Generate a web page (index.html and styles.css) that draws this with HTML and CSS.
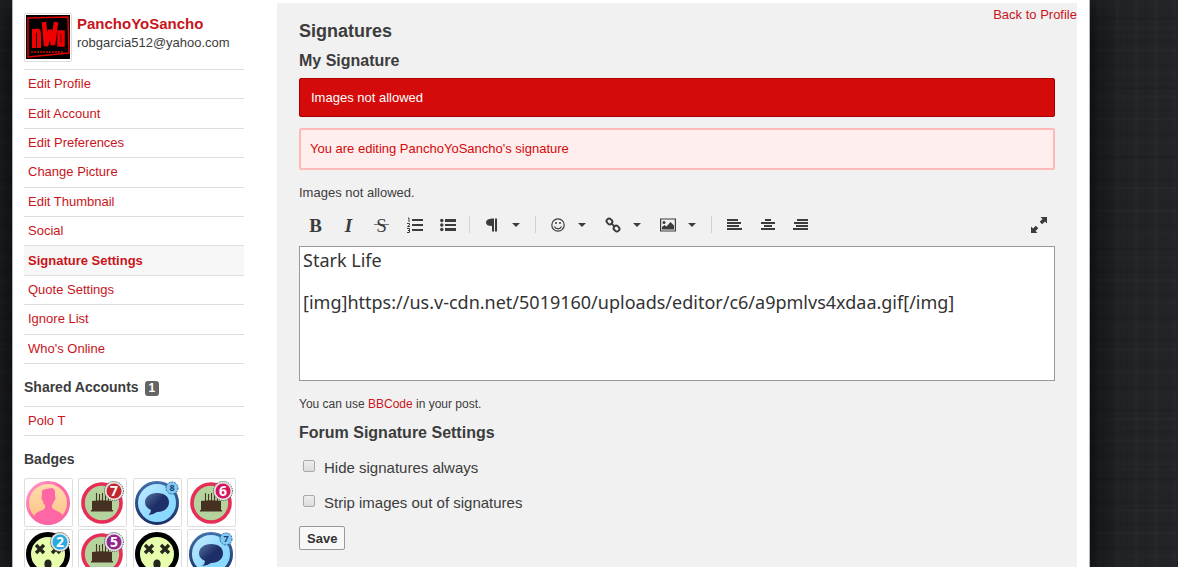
FILE: index.html
```html
<!DOCTYPE html>
<html lang="en">
<head>
  <meta charset="utf-8">
  <title>Signature Settings</title>
  <link rel="stylesheet" href="styles.css">
</head>
<body>
  <!-- Shared badge and icon shapes -->
  <svg class="sprite" aria-hidden="true">
    <defs>
      <linearGradient id="peach" x1="0" y1="0" x2="0" y2="1">
        <stop offset="0" stop-color="#ffdcae"/>
        <stop offset="1" stop-color="#fdc184"/>
      </linearGradient>
      <linearGradient id="pink" x1="0" y1="0" x2="1" y2="1">
        <stop offset="0" stop-color="#ff9cc6"/>
        <stop offset="0.5" stop-color="#ff66a6"/>
      </linearGradient>
      <linearGradient id="navy" x1="0" y1="0" x2="0" y2="1">
        <stop offset="0" stop-color="#3f6fa8"/>
        <stop offset="1" stop-color="#1d2e66"/>
      </linearGradient>
      <linearGradient id="sky" x1="0" y1="0" x2="1" y2="1">
        <stop offset="0" stop-color="#c9edff"/>
        <stop offset="0.6" stop-color="#8cd9ff"/>
      </linearGradient>
      <linearGradient id="bubble" x1="0" y1="0" x2="1" y2="1">
        <stop offset="0" stop-color="#56709f"/>
        <stop offset="0.5" stop-color="#1d2f66"/>
      </linearGradient>
      <clipPath id="round"><circle cx="22" cy="22" r="22"/></clipPath>
    </defs>
    <symbol id="badge-person" viewBox="0 0 44 44">
      <circle cx="22" cy="22" r="20.5" fill="url(#peach)" stroke="url(#pink)" stroke-width="3"/>
      <path clip-path="url(#round)" fill="#ff66a6" d="M16 10q1-2 4-2l6-1q3 1 3 4v4q1 1 0 4l-1 1q-1 3-2 4v3q2 2 5 3 6 2 6 7v7H8v-7q0-5 6-7 4-1 5-3v-3q-2-1-2-4l-1-1q-1-3 0-4z"/>
    </symbol>
    <symbol id="badge-cake" viewBox="0 0 44 44">
      <circle cx="22" cy="22" r="19" fill="#b5d39c" stroke="#e52d55" stroke-width="3.6"/>
      <path stroke="#4a3426" stroke-width="1.1" d="M16.500 12v8M19.500 13v7M22.500 12v8M25.500 13v7M28.500 15v5"/>
      <path fill="#463022" d="M12 20q10-1.500 20 0v9h1v1.500H11V29h1z"/>
    </symbol>
    <symbol id="badge-comment" viewBox="0 0 44 44">
      <circle cx="22" cy="22" r="20.500" fill="url(#sky)" stroke="url(#navy)" stroke-width="3"/>
      <path fill="url(#bubble)" d="M22 12c8 0 12 4 12 9.500S29 31 22 31q-4 3-9 3 3-2 3-5-6-3-6-7.500C10 16 15 12 22 12z"/>
    </symbol>
    <symbol id="badge-dizzy" viewBox="0 0 44 44">
      <circle cx="22" cy="22" r="19.500" fill="#e7ffad" stroke="#000" stroke-width="5"/>
      <path stroke="#26261f" stroke-width="3.400" d="M10 13l8 8M18 13l-8 8M26 13l8 8M34 13l-8 8"/>
      <ellipse cx="22" cy="32" rx="3.600" ry="4.500" fill="#26261f"/>
    </symbol>
    <symbol id="caret" viewBox="0 0 8 4">
      <path d="M0 0h8L4 4z"/>
    </symbol>
  </svg>

  <div class="page">
    <aside class="sidebar">
      <div class="user">
        <a class="photo" href="#" aria-label="PanchoYoSancho">
          <svg viewBox="0 0 44 44">
            <path fill="#000" d="M0 0h44v44H0z"/>
            <path fill="none" stroke="#e00000" stroke-width="1.500" d="M2 3l40-1 1 36-41 4z"/>
            <g fill="none" stroke="#f00000">
              <path stroke-width="4" d="M8 33V14M7 17q6-4 6 2v14"/>
              <path stroke-width="4.500" d="M18 7l2 24 4-16 3 15 3-23"/>
              <path stroke-width="3.500" d="M33 17h4v13h-4z"/>
            </g>
            <path stroke="#a00000" stroke-width="2" stroke-dasharray="2 1" d="M5 37h33"/>
          </svg>
        </a>
        <div class="user-text">
          <a class="username" href="#">PanchoYoSancho</a>
          <span class="email">robgarcia512@yahoo.com</span>
        </div>
      </div>

      <ul class="menu account-menu">
        <li><a href="#">Edit Profile</a></li>
        <li><a href="#">Edit Account</a></li>
        <li><a href="#">Edit Preferences</a></li>
        <li><a href="#">Change Picture</a></li>
        <li><a href="#">Edit Thumbnail</a></li>
        <li><a href="#">Social</a></li>
        <li class="active"><a href="#">Signature Settings</a></li>
        <li><a href="#">Quote Settings</a></li>
        <li><a href="#">Ignore List</a></li>
        <li><a href="#">Who's Online</a></li>
      </ul>

      <h4>Shared Accounts <span class="count">1</span></h4>
      <ul class="menu">
        <li><a href="#">Polo T</a></li>
      </ul>

      <h4>Badges</h4>
      <div class="badges">
        <a href="#" aria-label="Photogenic"><svg viewBox="0 0 44 44"><use href="#badge-person"/></svg></a>
        <a href="#" aria-label="Seventh anniversary"><svg viewBox="0 0 44 44"><use href="#badge-cake"/><g class="seal"><circle cx="34" cy="10" r="9.5"/><circle class="red" cx="34" cy="10" r="7.5"/><text x="34" y="15">7</text></g></svg></a>
        <a href="#" aria-label="Comments, level 8"><svg viewBox="0 0 44 44"><use href="#badge-comment"/><g class="seal small"><circle cx="37" cy="7" r="6"/><text x="37" y="10">8</text></g></svg></a>
        <a href="#" aria-label="Sixth anniversary"><svg viewBox="0 0 44 44"><use href="#badge-cake"/><g class="seal"><circle cx="34" cy="10" r="9.5"/><circle class="pink" cx="34" cy="10" r="7.5"/><text x="34" y="15">6</text></g></svg></a>
        <a href="#" aria-label="Second warning"><svg viewBox="0 0 44 44"><use href="#badge-dizzy"/><g class="seal"><circle cx="34" cy="10" r="9.5"/><circle class="blue" cx="34" cy="10" r="7.5"/><text x="34" y="15">2</text></g></svg></a>
        <a href="#" aria-label="Fifth anniversary"><svg viewBox="0 0 44 44"><use href="#badge-cake"/><g class="seal"><circle cx="34" cy="10" r="9.5"/><circle class="purple" cx="34" cy="10" r="7.5"/><text x="34" y="15">5</text></g></svg></a>
        <a href="#" aria-label="First warning"><svg viewBox="0 0 44 44"><use href="#badge-dizzy"/></svg></a>
        <a href="#" aria-label="Comments, level 7"><svg viewBox="0 0 44 44"><use href="#badge-comment"/><g class="seal small"><circle cx="37" cy="7" r="6"/><text x="37" y="10">7</text></g></svg></a>
      </div>
    </aside>

    <main class="content">
      <div class="options"><a href="#">Back to Profile</a></div>

      <form class="settings">
        <h1>Signatures</h1>
        <h2>My Signature</h2>
        <div class="alert">Images not allowed</div>
        <div class="warning">You are editing PanchoYoSancho's signature</div>
        <p class="rule">Images not allowed.</p>

        <div class="toolbar">
          <button type="button" class="letter bold" title="Bold">B</button>
          <button type="button" class="letter italic" title="Italic">I</button>
          <button type="button" class="letter strike" title="Strikethrough">S</button>
          <button type="button" title="Ordered list">
            <svg width="16" height="16" viewBox="0 0 16 16"><path d="M5 2h11v2H5zM5 7h11v2H5zM5 12h11v2H5z"/><path fill="none" stroke="#3c3c3c" d="M1 1h1v4M0 6.500h2.500v1.500L.500 9.500H3M0 11.500h2.500v4H0M1 13.500h1.500"/></svg>
          </button>
          <button type="button" title="Unordered list">
            <svg width="16" height="16" viewBox="0 0 16 16"><path d="M5 2h11v3H5zM5 7h11v2H5zM5 11h11v3H5z"/><circle cx="1.800" cy="3.500" r="1.700"/><circle cx="1.800" cy="8" r="1.700"/><circle cx="1.800" cy="12.500" r="1.700"/></svg>
          </button>
          <span class="sep"></span>
          <button type="button" class="dropdown" title="Format">
            <svg width="16" height="16" viewBox="0 0 16 16"><path d="M8 1.500h2v13H8V9Q2 9 2 5.500T8 1.500zM11 1.500h2v13h-2z"/></svg>
            <svg class="caret" width="8" height="4"><use href="#caret"/></svg>
          </button>
          <span class="sep"></span>
          <button type="button" class="dropdown" title="Emoji">
            <svg width="16" height="16" viewBox="0 0 16 16"><circle cx="8" cy="8" r="6.200" fill="none" stroke="#3c3c3c" stroke-width="1.200"/><circle cx="6" cy="6" r="1"/><circle cx="10" cy="6" r="1"/><path fill="none" stroke="#3c3c3c" stroke-width="1.200" d="M4.500 9.500q1 2.300 3.500 2.300t3.500-2.300"/></svg>
            <svg class="caret" width="8" height="4"><use href="#caret"/></svg>
          </button>
          <button type="button" class="dropdown" title="Link">
            <svg width="16" height="16" viewBox="0 0 16 16"><g fill="none" stroke="#3c3c3c" stroke-width="2" transform="rotate(45 8 8)"><rect x="0" y="5.500" width="6" height="5" rx="2.500"/><rect x="10" y="5.500" width="6" height="5" rx="2.500"/><path d="M5 8h6"/></g></svg>
            <svg class="caret" width="8" height="4"><use href="#caret"/></svg>
          </button>
          <button type="button" class="dropdown" title="Image">
            <svg width="16" height="16" viewBox="0 0 16 16"><path fill="none" stroke="#3c3c3c" stroke-width="1.200" d="M.600 2h14.800v12H.600z"/><circle cx="4" cy="5.500" r="1.500"/><path d="M2 12.500V10l2.500-2 2 1.500L10.500 5 14 8.500v4z"/></svg>
            <svg class="caret" width="8" height="4"><use href="#caret"/></svg>
          </button>
          <span class="sep"></span>
          <button type="button" title="Align left">
            <svg width="16" height="16" viewBox="0 0 16 16"><path d="M1 2h11v2H1zM1 5h14v2H1zM1 8h12v2H1zM1 11h15v2H1z"/></svg>
          </button>
          <button type="button" title="Align center">
            <svg width="16" height="16" viewBox="0 0 16 16"><path d="M6 2h6v2H6zM2 5h14v2H2zM5 8h8v2H5zM2 11h14v2H2z"/></svg>
          </button>
          <button type="button" title="Align right">
            <svg width="16" height="16" viewBox="0 0 16 16"><path d="M5 2h11v2H5zM2 5h14v2H2zM4 8h12v2H4zM1 11h15v2H1z"/></svg>
          </button>
          <button type="button" class="fullpage" title="Full page">
            <svg width="16" height="16" viewBox="0 0 16 16"><path d="M9.500 0H16v6.500l-2-2-2.800 2.800-2.500-2.500L11.500 2zM0 9.500l2 2 2.800-2.800 2.500 2.500L4.500 14l2 2H0z"/></svg>
          </button>
        </div>
        <textarea aria-label="Signature" spellcheck="false">Stark Life

[img]https://us.v-cdn.net/5019160/uploads/editor/c6/a9pmlvs4xdaa.gif[/img]</textarea>
        <p class="hint">You can use <a href="#">BBCode</a> in your post.</p>

        <h2>Forum Signature Settings</h2>
        <label class="check"><input type="checkbox">Hide signatures always</label>
        <label class="check"><input type="checkbox">Strip images out of signatures</label>
        <button type="submit" class="save">Save</button>
      </form>
    </main>
  </div>
</body>
</html>
```

FILE: styles.css
```css
* {
  box-sizing: border-box;
}

body {
  margin: 0;
  height: 100vh;
  overflow: hidden;
  font-family: "Liberation Sans", Arial, sans-serif;
  font-size: 13px;
  color: #3c3c3c;
  background-color: #222427;
  background-image:
    repeating-linear-gradient(0deg, transparent 0 2px, rgba(0, 0, 0, 0.08) 3px, transparent 4px 7px),
    repeating-linear-gradient(0deg, transparent 0 9px, rgba(255, 255, 255, 0.02) 11px, transparent 12px 17px, rgba(0, 0, 0, 0.08) 18px, transparent 23px),
    repeating-linear-gradient(90deg, transparent 0 5px, rgba(0, 0, 0, 0.08) 6px, transparent 7px 13px, rgba(255, 255, 255, 0.02) 15px, transparent 19px);
}

a {
  color: #c8151b;
  text-decoration: none;
}

h1,
h2,
h4,
p,
ul {
  margin: 0;
  padding: 0;
}

.sprite {
  position: absolute;
  width: 0;
  height: 0;
}

.page {
  display: flex;
  gap: 33px;
  min-height: 100vh;
  margin: 0 88px 0 12px;
  padding: 3px 12px 0 11px;
  background: #ffffff;
  border: solid #b4b4b4;
  border-width: 0 1px;
  box-shadow: 0 0 40px #000000;
}

/* Sidebar */

.sidebar {
  flex: 0 0 220px;
  padding-top: 10px;
}

.user {
  display: flex;
  gap: 5px;
  height: 56px;
}

.photo,
.badges a {
  width: 48px;
  height: 49px;
  padding: 1px 1px 2px;
  border: 1px solid #dddddd;
  border-radius: 2px;
}

.photo svg,
.badges svg {
  display: block;
  width: 100%;
  height: 100%;
}

.user-text {
  display: flex;
  flex-direction: column;
  line-height: 19px;
  padding-top: 1px;
}

.username {
  font-size: 15px;
  font-weight: bold;
}

.menu {
  list-style: none;
  border-top: 1px solid #dddddd;
}

.menu li {
  display: flex;
  align-items: center;
  height: 29px;
  padding: 0 4px 1px;
  border-bottom: 1px solid #dddddd;
}

.account-menu {
  display: grid;
  grid-auto-rows: 1fr;
  height: 295px;
}

.account-menu li {
  height: auto;
}

.menu .active {
  background: #f7f7f7;
  font-weight: bold;
}

h4 {
  font-size: 14px;
  line-height: 20px;
  padding: 13px 0 9px;
}

.count {
  display: inline-block;
  margin-left: 2px;
  padding: 0 4px;
  border-radius: 3px;
  background: #646464;
  color: #ffffff;
  font-size: 12px;
  line-height: 15px;
}

.badges {
  display: grid;
  grid-template-columns: repeat(4, 49px);
  justify-content: space-between;
  gap: 2px 0;
  width: 212px;
}

.badges a {
  width: 49px;
  padding: 2px 2px 1px 1px;
}

.seal circle {
  fill: #e4e4e4;
  stroke: #444444;
  stroke-dasharray: 1 1;
}

.seal text {
  fill: #ffffff;
  font-family: "Open Sans", sans-serif;
  font-size: 14px;
  font-weight: bold;
  text-anchor: middle;
}

.seal .red,
.seal .pink,
.seal .blue,
.seal .purple {
  stroke: none;
}

.seal .red {
  fill: #c1272d;
}

.seal .pink {
  fill: #d8145f;
}

.seal .blue {
  fill: #29abe2;
}

.seal .purple {
  fill: #93278f;
}

.small circle {
  fill: #7fcaf5;
  stroke: #2c5f96;
  stroke-dasharray: 2 1;
}

.small text {
  fill: #1d3c70;
  font-size: 9px;
}

/* Content */

.content {
  flex: 1;
  min-width: 0;
  background: #f1f1f1;
}

.options {
  padding-top: 3px;
  line-height: 18px;
  text-align: right;
}

.settings {
  padding: 0 22px 20px;
}

h1 {
  font-size: 18px;
  line-height: 15px;
}

h2 {
  font-size: 16px;
  line-height: 20px;
  padding: 12px 0 7px;
}

.alert {
  padding: 9px 11px;
  line-height: 19px;
  color: #ffffff;
  background: #d50a0a;
  border: 1px solid #a80000;
  border-radius: 2px;
}

.warning {
  margin-top: 11px;
  padding: 9px;
  line-height: 20px;
  color: #d50a0a;
  background: #ffeeee;
  border: 2px solid #ffb9b9;
  border-radius: 2px;
}

.rule {
  margin-top: 13px;
  line-height: 20px;
}

/* Editor */

.toolbar {
  display: flex;
  align-items: center;
  height: 43px;
}

.toolbar button {
  display: flex;
  align-items: center;
  justify-content: center;
  width: 33px;
  height: 32px;
  padding: 0;
  border: none;
  background: none;
  color: #3c3c3c;
  cursor: pointer;
}

.toolbar svg {
  fill: #3c3c3c;
}

.toolbar .letter {
  padding-top: 2px;
  font-family: "Liberation Serif", serif;
  font-size: 19px;
}

.toolbar .bold {
  font-weight: bold;
}

.toolbar .italic {
  font-weight: bold;
  font-style: italic;
}

/* The strike runs wider than the letter */
.toolbar .strike {
  background: linear-gradient(#777777, #777777) center / 15px 1px no-repeat;
}

.toolbar .dropdown {
  width: 55px;
  gap: 12px;
  padding-right: 2px;
}

.sep {
  width: 1px;
  height: 17px;
  margin: 0 5px;
  background: #d2d2d2;
}

.toolbar .fullpage {
  margin-left: auto;
}

textarea {
  display: block;
  width: 100%;
  height: 135px;
  padding: 3px;
  border: 1px solid #999999;
  border-radius: 0;
  outline: none;
  resize: none;
  background: #ffffff;
  color: #333333;
  font-family: "Lucida Grande", "Lucida Sans Unicode", "Noto Sans", sans-serif;
  font-size: 18px;
  line-height: 21px;
}

.hint {
  margin-top: 13px;
  font-size: 12px;
  line-height: 20px;
}

.hint + h2 {
  padding-top: 9px;
}

.check {
  display: flex;
  align-items: center;
  gap: 9px;
  height: 35px;
  padding-left: 4px;
  font-size: 15px;
}

.check input {
  appearance: none;
  width: 12px;
  height: 12px;
  margin: 0 0 3px;
  border: 1px solid #a8a8a8;
  border-radius: 2px;
  background: linear-gradient(#eeeeee, #dcdcdc);
}

.save {
  display: block;
  margin-top: 6px;
  padding: 1px 7px 0;
  border: 1px solid #999999;
  border-radius: 2px;
  background: #f8f8f8;
  color: #333333;
  font-family: inherit;
  font-size: 13px;
  font-weight: bold;
  line-height: 21px;
}
```
